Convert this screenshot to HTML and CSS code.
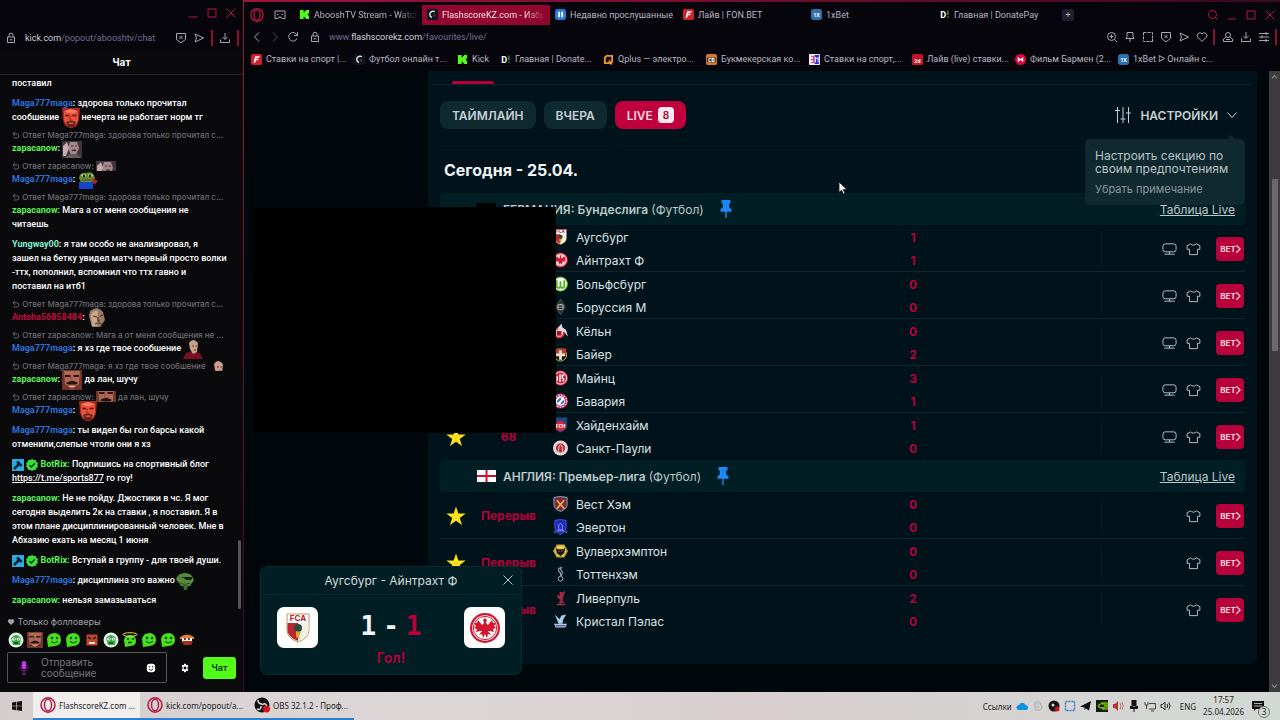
FILE: index.html
```html
<!DOCTYPE html>
<html lang="ru">

<head>
    <meta charset="UTF-8" />
    <meta name="viewport" content="width=device-width, initial-scale=1.0" />
    <title>FlashscoreKZ.com - Избранное</title>
    <link rel="stylesheet" href="styles.css">
</head>

<body>
    <!-- Icons -->
    <svg class="sprite" aria-hidden="true">
        <symbol id="lock" viewBox="0 0 12 12"><path d="M2.500 5h7v5.500h-7zM4 5V3.200a2 2 0 0 1 4 0V5M4.500 7.800h3" /></symbol>
        <symbol id="shield" viewBox="0 0 12 12"><path d="M1.500 1.500h9v6L6 10.800 1.500 7.500zM4.500 4l3 3M7.500 4l-3 3" /></symbol>
        <symbol id="send" viewBox="0 0 12 12"><path d="M2 2l8.500 4L2 10l1.500-4z" /></symbol>
        <symbol id="download" viewBox="0 0 12 12"><path d="M6 1v6M3.500 5L6 7.500 8.500 5M1.500 7.500v3h9v-3" /></symbol>
        <symbol id="min" viewBox="0 0 12 12"><path d="M1.500 10h9" /></symbol>
        <symbol id="max" viewBox="0 0 12 12"><path d="M2 2h8v8H2z" /></symbol>
        <symbol id="close" viewBox="0 0 12 12"><path d="M1.500 1.500l9 9M10.500 1.500l-9 9" /></symbol>
        <symbol id="search" viewBox="0 0 12 12"><circle cx="5.500" cy="5.500" r="4" /><path d="M8.500 8.500l2 2" /></symbol>
        <symbol id="zoom" viewBox="0 0 12 12"><circle cx="5.500" cy="5.500" r="4" /><path d="M8.500 8.500l2.500 2.500M3.500 5.500h4M5.500 3.500v4" /></symbol>
        <symbol id="pinbar" viewBox="0 0 12 12"><path d="M3 1.500h6v4l1 2H2l1-2zM6 7.500V11" /></symbol>
        <symbol id="snap" viewBox="0 0 12 12"><path d="M1.500 1.500h9v6M1.500 1.500v9h6M8 10.500h3M10.500 8v3" stroke-dasharray="3 1" /></symbol>
        <symbol id="heart" viewBox="0 0 12 12"><path d="M6 10.500L1.800 6.300a2.500 2.500 0 0 1 4.200-3.500 2.500 2.500 0 0 1 4.200 3.500z" /></symbol>
        <symbol id="user" viewBox="0 0 12 12"><circle cx="6" cy="4" r="2.500" /><path d="M4 6L1.500 8v2.500h9V8L8 6M4 8.500h4" /></symbol>
        <symbol id="menu" viewBox="0 0 12 12"><path d="M1 2.500h10M1 6h10M1 9.500h10M8 1v3M4 4.500v3M8 8v3" /></symbol>
        <symbol id="back" viewBox="0 0 12 12"><path d="M8 1.500L3.500 6 8 10.500" /></symbol>
        <symbol id="forward" viewBox="0 0 12 12"><path d="M4 1.500L8.500 6 4 10.500" /></symbol>
        <symbol id="reload" viewBox="0 0 12 12"><path d="M10 7.500A4.300 4.300 0 1 1 9.300 3L10.500 4.500M10.500 1v3.500H7" /></symbol>
        <symbol id="vr" viewBox="0 0 14 12"><path d="M2 2h10v7.500H9.200L8 8H6L4.800 9.500H2zM4 5.500h1.500M8.500 5.500H10" /></symbol>
        <symbol id="reply" viewBox="0 0 10 10"><path d="M4 .8L1.200 3.500 4 6.200M1.200 3.500H6a2.600 2.600 0 0 1 0 5.200H2" /></symbol>
        <symbol id="chevron" viewBox="0 0 12 12"><path d="M1.500 3.500L6 8.500l4.500-5" /></symbol>
        <symbol id="sliders" viewBox="0 0 18 18"><path d="M3.500 1v16M1 4.500h5M9 1v16M6.500 13h5M14.500 1v16M12 7h5" /></symbol>
        <symbol id="tv" viewBox="0 0 16 14"><rect x="1" y="1.500" width="14" height="8.500" rx="2.500" /><path d="M2.500 12.500h11M8 10v2.500" /></symbol>
        <symbol id="shirt" viewBox="0 0 16 14"><path d="M5 1.500L1.200 3.500v3.800h2.600V13h8.400V7.300h2.600V3.500L11 1.500c-.8 1.800-5.200 1.800-6 0z" /></symbol>
        <symbol id="star" viewBox="0 0 20 20"><path fill="#ffe01b" stroke="none" d="M10 .5l2.400 7h7.300l-5.900 4.400 2.200 7.200-6-4.400-6 4.400 2.200-7.200L.3 7.500h7.300z" /></symbol>
        <symbol id="pin" viewBox="0 0 12 20"><path fill="#1e86f0" stroke="none" d="M1.500 1h9v3.500H9.200v4l2.300 1.800v2.400H6.700V19H5.300v-6.300H.5v-2.400l2.300-1.800v-4H1.500z" /></symbol>
        <symbol id="opera" viewBox="0 0 16 16"><ellipse cx="8" cy="8" rx="7" ry="7.200" /><ellipse cx="8" cy="8" rx="3.500" ry="5.800" /></symbol>
        <symbol id="arrow" viewBox="0 0 10 14"><path fill="#fff" stroke="#111" stroke-width=".8" d="M1 1v10.500l2.500-2.300L5.300 13l1.700-.8-1.700-3.600H9z" /></symbol>

        <!-- Site icons -->
        <symbol id="fav-kick" viewBox="0 0 12 12"><path fill="#53fc18" d="M1 1h4v2.500h1.300V2.200h1.300V1H11v4H9.700v1H8.500h1.200v1H11v4H7.600V9.800H6.300V8.500H5V11H1z" /></symbol>
        <symbol id="fav-flash" viewBox="0 0 12 12"><rect width="12" height="12" rx="2" fill="#04191f" /><path d="M8.500 3A3.500 3.500 0 0 0 3 6a3.500 3.500 0 0 0 2.500 3.200" fill="none" stroke="#eee" stroke-width="1.500" /><path d="M6 6h3.500L8 9z" fill="#ff0046" opacity=".7" /></symbol>
        <symbol id="fav-pause" viewBox="0 0 12 12"><rect width="12" height="12" rx="3" fill="#2979d9" /><path d="M3.500 3h2v6h-2zM6.800 3h2v6h-2z" fill="#fff" /></symbol>
        <symbol id="fav-fon" viewBox="0 0 12 12"><rect width="12" height="12" rx="2" fill="#d0202e" /><path d="M4.500 2.500h5L9 4H6l-.2 1.200h2.500L7.800 6.800H5.300L4.600 9.500H2.800z" fill="#fff" /></symbol>
        <symbol id="fav-1x" viewBox="0 0 12 12"><rect width="12" height="12" rx="3" fill="#2f70a8" /><text x="6" y="8.500" class="fav-text">1X</text></symbol>
        <symbol id="fav-donate" viewBox="0 0 12 12"><text x="4.500" y="9.500" class="fav-text big">D</text><path d="M9 1.500h1.500v5H9zM9 8h1.500v1.500H9z" fill="#2c9c4a" /></symbol>
        <symbol id="fav-qplus" viewBox="0 0 12 12"><path d="M4 2h6v6.500L8 10H2V4z" fill="none" stroke="#f09a28" stroke-width="2" /><path d="M6.500 7l3 4.500" stroke="#f09a28" stroke-width="2" /></symbol>
        <symbol id="fav-orange" viewBox="0 0 12 12"><rect width="12" height="12" rx="2" fill="#d9772a" /><rect x="1" y="4" width="10" height="5" fill="#333" /><text x="6" y="8.500" class="fav-text">СБ</text></symbol>
        <symbol id="fav-bm" viewBox="0 0 12 12"><rect width="12" height="12" rx="1" fill="#f4f1ff" /><path d="M6 1h5v10H6z" fill="#3529c8" /><path d="M2 2.500h3v7H2M2 6h3" fill="none" stroke="#e02040" /><path d="M7 9V3.500l1.500 2 1.500-2V9" fill="none" stroke="#fff" /></symbol>
        <symbol id="fav-2d" viewBox="0 0 12 12"><rect width="12" height="12" rx="2" fill="#c4142a" /><text x="6" y="9.500" class="fav-text">2d</text></symbol>
        <symbol id="fav-film" viewBox="0 0 12 12"><circle cx="6" cy="6" r="6" fill="#e00840" /><path d="M3 3.500l2 .8v1.200h2V4.300l2-.8v5l-2-.8V6.800H5v.9l-2 .8z" fill="#fff" /></symbol>

        <!-- Chat emotes -->
        <symbol id="em-red" viewBox="0 0 20 20"><path d="M1 0h18l-1 12q-2 8-8 8t-8-8z" fill="#a52a20" /><path d="M3 3q7-4 14 0v9q-2 7-7 7t-7-7z" fill="#e8513c" /><path d="M4 3q6-3 12 0l-3 2H7z" fill="#f47d62" /><path d="M4.500 7.500h4M11.500 7.500h4" stroke="#5b120f" stroke-width="1.400" /><path d="M9.500 8l-.8 4h2.500" stroke="#a72a20" fill="none" /><path d="M5 14q5-3 10 0l-2 5H7z" fill="#6e1f18" /><path d="M7.500 15.200h5" stroke="#e28070" /></symbol>
        <symbol id="em-grey" viewBox="0 0 20 18"><path d="M0 1h20v17H0z" fill="#3f353c" /><path d="M8 2h7l2 6-3 7H9L6 8z" fill="#a58789" /><path d="M1 6l4-4 2 6-3 8H1z" fill="#c8abad" /><path d="M9 6h2.500M13 6h2M10 11q2-2 4 0" stroke="#412b34" stroke-width="1.200" fill="none" /><path d="M3 18l5-4h7l4 4z" fill="#685966" /></symbol>
        <symbol id="em-pepe" viewBox="0 0 20 18"><path d="M1 7Q2 1 8 2q7-3 9 5l-3 5H3z" fill="#5f8a2e" /><path d="M3 4.500h5M10 4.500h5" stroke="#b9c987" stroke-width="2" /><path d="M5 5h2M11 5h2" stroke="#111" stroke-width="2" /><path d="M4 9h10" stroke="#6b5a24" stroke-width="1.500" /><path d="M1 11h14v7H1z" fill="#1545c8" /><path d="M14 7l6 3-4 4z" fill="#b02a20" /></symbol>
        <symbol id="em-head" viewBox="0 0 20 20"><path d="M3 3q7-6 13 1l2 8-5 7H5L2 8z" fill="#9d7a66" /><path d="M4 7q2-5 7-4l-1 15H5z" fill="#c7a98f" /><path d="M6 8l4 1M13 8l3-1M11 9v4h2M8 16q4-2 6 0" stroke="#4b3025" stroke-width="1.200" fill="none" /></symbol>
        <symbol id="em-robe" viewBox="0 0 20 20"><path d="M0 20l3-6 6-2 8 2 3 6z" fill="#7a0f20" /><path d="M6 4q4-6 9 0l-1 9-4 2-3-5z" fill="#caa08b" /><path d="M9 7h2M12.500 7h1.500M11 11h2" stroke="#573127" stroke-width="1.200" /></symbol>
        <symbol id="em-tache" viewBox="0 0 20 20"><path d="M0 0h20v20H0z" fill="#6f352c" /><path d="M2 1h16l-1 13-7 5-7-5z" fill="#b06754" /><path d="M3 6h5.500M11.500 6H17" stroke="#2c1613" stroke-width="2" /><path d="M9 7v4h3" fill="none" stroke="#8a4a3c" /><path d="M4 13q6-4 12 0l-2 1.500H6z" fill="#24120f" /><path d="M7 16.500h6" stroke="#e3b3a3" /></symbol>
        <symbol id="em-frog" viewBox="0 0 20 20"><path d="M1 8Q3 2 10 2t9 7l-4 6H6z" fill="#55893e" /><path d="M5 6h13l-2 3H11L9 7z" fill="#15200f" /><path d="M4 12q6 3 11 0" stroke="#294c20" fill="none" /><path d="M8 14h5l-1 5H9z" fill="#3f6b31" /></symbol>
        <symbol id="em-blob" viewBox="0 0 16 16"><path d="M2 15L1 7q1-6 8-6 6 1 6 7 0 5-6 6z" fill="#46e01c" /><circle cx="6" cy="6" r="1.200" fill="#123a08" /><circle cx="11" cy="6" r="1.200" fill="#123a08" /><path d="M5 9.500q3 3 7 0" stroke="#123a08" fill="none" /></symbol>
        <symbol id="em-white" viewBox="0 0 16 16"><circle cx="8" cy="8" r="7.500" fill="#e4f3e2" /><path d="M3 6q5-6 10 0l-1 7H5z" fill="#35a848" /><ellipse cx="6" cy="7" rx="1.800" ry="1.500" fill="#fff" /><ellipse cx="10.500" cy="7" rx="1.800" ry="1.500" fill="#fff" /><path d="M6 7h1M10 7h1M6 11h4" stroke="#111" /></symbol>
        <symbol id="em-box" viewBox="0 0 16 16"><rect x="2.500" y="2.500" width="11" height="11" fill="#c3452f" /><path d="M4 5l3 2M12 5L9 7" stroke="#111" stroke-width="1.500" /><path d="M5 11h6" stroke="#f1dfca" stroke-width="2" /></symbol>
        <symbol id="em-halo" viewBox="0 0 16 16"><path d="M3 15L2 8q1-5 7-5 5 1 5 6t-6 5z" fill="#46e01c" /><ellipse cx="8" cy="2.500" rx="7" ry="1.800" fill="none" stroke="#e9d34d" /><path d="M5 7h2M10 7h2M6 10.500h4" stroke="#123a08" stroke-width="1.500" /></symbol>
        <symbol id="em-burger" viewBox="0 0 16 16"><path d="M1 5q7-5 14 0v2H1z" fill="#df7f34" /><path d="M3 6h10v4H3z" fill="#fff0dd" /><path d="M2 9h12l-2 4H5z" fill="#a62c1b" /><path d="M5 7h2M9 7h2" stroke="#111" stroke-width="1.500" /></symbol>
        <symbol id="badge-mod" viewBox="0 0 12 12"><rect width="12" height="12" fill="#2ba9e0" /><path d="M2 10l5-5M5 2.500L9.500 7" stroke="#06222f" stroke-width="2.500" /></symbol>
        <symbol id="badge-ok" viewBox="0 0 12 12"><path fill="#3ae03a" d="M6 0l1.700 1.100 2-.1.600 2L12 4.200 11.300 6l.7 1.800-1.700 1.200-.6 2-2-.1L6 12l-1.700-1.100-2 .1-.6-2L0 7.800.7 6 0 4.200 1.700 3l.6-2 2 .1z" /><path d="M3.500 6.200l2 1.800 3.200-3.700" stroke="#04250a" stroke-width="1.400" fill="none" /></symbol>

        <!-- Club crests -->
        <symbol id="fca" viewBox="0 0 24 30"><path d="M1 1h22v16q0 8-11 12Q1 25 1 17z" fill="#fff" stroke="#b99a5a" /><path d="M1.500 10H12v18Q1.500 24 1.500 17z" fill="#bd2532" /><path d="M12 10h10.500v7q0 8-10.500 11z" fill="#f2efe4" /><circle cx="12" cy="15" r="4" fill="#2e4a3c" /><path d="M10 18l5 1-2 4 1 3-4-2z" fill="#cfa92b" /><text x="12" y="8" class="crest-text">FCA</text></symbol>
        <symbol id="sge" viewBox="0 0 30 30"><circle cx="15" cy="15" r="15" fill="#d3152d" /><circle cx="15" cy="15" r="12.800" fill="#fff" /><circle cx="15" cy="15" r="11.600" fill="none" stroke="#d3152d" stroke-width="1" /><path fill="#d3152d" d="M15 5l2 2-1 3 2 2 4-5 1 3 3 0-2 3 2 2-3 1 1 3-4-1-2 0 3 4-3-1-1 4-2-4-2 4-1-4-3 1 3-4-2 0-4 1 1-3-3-1 2-2-2-3 3 0 1-3 4 5 2-2-1-3z" /></symbol>
        <symbol id="wob" viewBox="0 0 16 16"><circle cx="8" cy="8" r="8" fill="#57b52b" /><circle cx="8" cy="8" r="6.800" fill="#fff" /><path d="M4 4v6q0 2 2 2t2-2V5v5q0 2 2 2t2-2V4" fill="none" stroke="#57b52b" stroke-width="2" /></symbol>
        <symbol id="bmg" viewBox="0 0 16 16"><path d="M8 0l5 8-5 8-5-8z" fill="#202629" stroke="#5b6468" /><circle cx="8" cy="8" r="3.500" fill="#a8aeb1" /><path d="M6 7h4M6 9.500h4" stroke="#111" stroke-width="1.200" /></symbol>
        <symbol id="koe" viewBox="0 0 16 16"><circle cx="6.500" cy="10" r="6" fill="#dc2534" /><circle cx="6.500" cy="10" r="4" fill="#f4dadd" /><path d="M4 8h5v5H4z" fill="#a21522" /><path d="M5 5l4-5 1 4 4 3 2 7-4-5-4-1z" fill="#d8dadd" /></symbol>
        <symbol id="b04" viewBox="0 0 16 16"><circle cx="8" cy="9" r="6.500" fill="#161616" stroke="#d4b54a" /><path d="M2 2h5v6H2zM9 2h5v6H9z" fill="#c43a30" /><path d="M8 4v10M3 9h10" stroke="#e8e1ce" stroke-width="3" /></symbol>
        <symbol id="m05" viewBox="0 0 16 16"><circle cx="8" cy="8" r="8" fill="#d6203a" /><circle cx="8" cy="8" r="6.500" fill="none" stroke="#fff" /><path d="M4.500 11V6M7.500 12V4M10 11q3-1 0-3V5h2" fill="none" stroke="#fff" stroke-width="1.600" /></symbol>
        <symbol id="fcb" viewBox="0 0 16 16"><circle cx="8" cy="8" r="8" fill="#d0204f" /><circle cx="8" cy="8" r="6.500" fill="none" stroke="#d5cfe8" stroke-width="1.500" stroke-dasharray="2 1" /><circle cx="8" cy="8" r="5" fill="#fff" /><path d="M4 8l4-4 1 2-4 4zM8 10l4-4v3l-3 3z" fill="#2872c8" /></symbol>
        <symbol id="fch" viewBox="0 0 16 16"><path d="M1 0h14v9q0 4-7 7-7-3-7-7z" fill="#174c83" /><circle cx="8" cy="9" r="5.500" fill="#dc2038" /><text x="8" y="11" class="crest-text tiny">FCH</text></symbol>
        <symbol id="stp" viewBox="0 0 16 16"><circle cx="8" cy="8" r="8" fill="#f3eeee" /><circle cx="8" cy="8" r="5" fill="#bd2637" /><path d="M6 12V7l2-3 2 3v5" fill="none" stroke="#f1d9db" /><circle cx="8" cy="8" r="6.700" fill="none" stroke="#a0525a" stroke-dasharray="1 1" stroke-width=".7" /></symbol>
        <symbol id="whu" viewBox="0 0 16 16"><path d="M1 1q7-2 14 0v8q0 4-7 7-7-3-7-7z" fill="#7d2638" stroke="#7fb0c8" /><path d="M4 4l8 9M12 4l-8 9" stroke="#e0b45a" stroke-width="1.800" /></symbol>
        <symbol id="eve" viewBox="0 0 16 16"><path d="M2 1q6-2 12 0v8q0 4-6 7-6-3-6-7z" fill="#1d2cc0" stroke="#4955da" /><path d="M6 11V6l2-2 2 2v5zM4 12h8" stroke="#8e98f2" fill="none" /><path d="M0 12l4 1-2 2zM16 12l-4 1 2 2z" fill="#4955da" /></symbol>
        <symbol id="wol" viewBox="0 0 16 16"><path d="M4 1h8l4 7-4 7H4L0 8z" fill="#c9a02a" /><path d="M5 2.500h6L14 8l-3 5.500H5L2 8z" fill="#e9cf60" /><path d="M3 5l3 1h4l3-1-1 5-4 3.500L4 10z" fill="#161616" /><path d="M5.500 8h2M8.500 8h2" stroke="#c33" /></symbol>
        <symbol id="tot" viewBox="0 0 16 16"><circle cx="8" cy="13" r="2.500" fill="none" stroke="#aab8cc" /><path d="M8 10V7L6 5V2l3-1-1 2 2 3-1 4" fill="none" stroke="#8c9db8" stroke-width="1.200" /></symbol>
        <symbol id="liv" viewBox="0 0 16 16"><path fill="#a32a3a" d="M7 1l3 1 3-2-1 4-1 3-1 3 2 3H6l2-3-3-2-1-4 3 2z" /><path d="M4 15h9M8 11v3" stroke="#a32a3a" stroke-width="1.500" /></symbol>
        <symbol id="cry" viewBox="0 0 16 16"><path fill="#a9d2e8" d="M2 1l5 5 2-4 5-1-3 5-1 5H6L4 6z" /><path d="M1 11h14l-2 4H3z" fill="#c9cbd8" /><path d="M3 13h10" stroke="#3565b0" stroke-width="1.500" /></symbol>
    </svg>

    <div class="desktop">
        <!-- Chat popout -->
        <aside class="chat-window">
            <div class="window-buttons">
                <button aria-label="Свернуть"><svg class="icon"><use href="#min" /></svg></button>
                <button aria-label="Развернуть"><svg class="icon"><use href="#max" /></svg></button>
                <button aria-label="Закрыть"><svg class="icon"><use href="#close" /></svg></button>
            </div>
            <div class="chat-url">
                <svg class="icon"><use href="#lock" /></svg>
                <span class="url">kick.com<i>/popout/abooshtv/chat</i></span>
                <svg class="icon"><use href="#shield" /></svg>
                <svg class="icon"><use href="#send" /></svg>
                <span class="mark"></span>
                <svg class="icon"><use href="#download" /></svg>
                <span class="mark"></span>
            </div>
            <h2 class="chat-title">Чат</h2>

            <div class="messages">
                <p>поставил</p>
                <p><b class="blue">Maga777maga</b><b>:</b> здорова только прочитал<br>сообшение <svg class="emote"><use href="#em-red" /></svg>нечерта не работает норм тг</p>
                <div class="answer">
                    <p class="reply"><svg><use href="#reply" /></svg> Ответ Maga777maga: здорова только прочитал с...</p>
                    <p><b class="green">zapacanow</b><b>:</b> <svg class="emote"><use href="#em-grey" /></svg></p>
                </div>
                <div class="answer">
                    <p class="reply"><svg><use href="#reply" /></svg> Ответ zapacanow: <svg class="emote cut"><use href="#em-grey" width="20" height="18" /></svg></p>
                    <p><b class="blue">Maga777maga</b><b>:</b> <svg class="emote"><use href="#em-pepe" /></svg></p>
                </div>
                <div class="answer">
                    <p class="reply"><svg><use href="#reply" /></svg> Ответ Maga777maga: здорова только прочитал с...</p>
                    <p><b class="green">zapacanow:</b> Мага а от меня сообщения не<br>читаешь</p>
                </div>
                <p><b class="mint">Yungway00</b><b>:</b> я там особо не анализировал, я<br>зашел на бетку увидел матч первый просто волки<br>-ттх, пополнил, вспомнил что ттх гавно и<br>поставил на итб1</p>
                <div class="answer">
                    <p class="reply"><svg><use href="#reply" /></svg> Ответ Maga777maga: здорова только прочитал с...</p>
                    <p><b class="red">Antoha56858484</b><b>:</b> <svg class="emote"><use href="#em-head" /></svg></p>
                </div>
                <div class="answer">
                    <p class="reply"><svg><use href="#reply" /></svg> Ответ zapacanow: Мага а от меня сообщения не ...</p>
                    <p><b class="blue">Maga777maga</b><b>:</b> я хз где твое сообшение <svg class="emote"><use href="#em-robe" /></svg></p>
                </div>
                <div class="answer">
                    <p class="reply"><svg><use href="#reply" /></svg> Ответ Maga777maga: я хз где твое сообшение <svg class="emote cut"><use href="#em-robe" width="20" height="20" /></svg></p>
                    <p><b class="green">zapacanow</b><b>:</b> <svg class="emote"><use href="#em-tache" /></svg> да лан, шучу</p>
                </div>
                <div class="answer">
                    <p class="reply"><svg><use href="#reply" /></svg> Ответ zapacanow: <svg class="emote cut"><use href="#em-tache" y="-4" width="20" height="20" /></svg> да лан, шучу</p>
                    <p><b class="blue">Maga777maga</b><b>:</b> <svg class="emote"><use href="#em-red" /></svg></p>
                </div>
                <p><b class="blue">Maga777maga</b><b>:</b> ты видел бы гол барсы какой<br>отменили,слепые чтоли они я хз</p>
                <p><svg class="badge"><use href="#badge-mod" /></svg> <svg class="badge"><use href="#badge-ok" /></svg> <b class="green">BotRix:</b> Подпишись на спортивный блог<br><a href="https://t.me/sports877">https://t.me/sports877</a> го гоу!</p>
                <p><b class="green">zapacanow:</b> Не не пойду. Джостики в чс. Я мог<br>сегодня выделить 2к на ставки , я поставил. Я в<br>этом плане дисциплинированный человек. Мне в<br>Абхазию ехать на месяц 1 июня</p>
                <p><svg class="badge"><use href="#badge-mod" /></svg> <svg class="badge"><use href="#badge-ok" /></svg> <b class="green">BotRix:</b> Вступай в группу - для твоей души.</p>
                <p><b class="blue">Maga777maga</b><b>:</b> дисциплина это важно<svg class="emote"><use href="#em-frog" /></svg></p>
                <p><b class="green">zapacanow:</b> нельзя замазываться</p>
                <span class="chat-thumb"></span>
            </div>

            <div class="chat-footer">
                <p class="followers"><svg><use href="#heart" /></svg> Только фолловеры</p>
                <div class="quick-emotes">
                    <svg><use href="#em-white" /></svg>
                    <svg><use href="#em-tache" /></svg>
                    <svg><use href="#em-blob" /></svg>
                    <svg><use href="#em-blob" /></svg>
                    <svg><use href="#em-box" /></svg>
                    <svg><use href="#em-white" /></svg>
                    <svg><use href="#em-halo" /></svg>
                    <svg><use href="#em-blob" /></svg>
                    <svg><use href="#em-blob" /></svg>
                    <svg><use href="#em-burger" /></svg>
                </div>
                <form class="chat-form">
                    <div class="field">
                        <svg viewBox="0 0 12 16"><rect x="3.500" y="1" width="5" height="9" rx="2.500" fill="#b93be0" /><path d="M1.500 7a4.500 4.500 0 0 0 9 0M6 11.500V15M3.500 15h5" fill="none" stroke="#8a22b5" /></svg>
                        <textarea rows="2" aria-label="Сообщение" placeholder="Отправить сообщение"></textarea>
                        <svg viewBox="0 0 12 12" class="smile"><rect x="1" y="1" width="10" height="10" rx="3.500" fill="#fff" /><path d="M4 3.500v2M8 3.500v2M3.500 7.500q2.500 2.500 5 0" fill="none" stroke="#111" /></svg>
                    </div>
                    <button type="button" class="gear" aria-label="Настройки чата"><svg viewBox="0 0 12 12"><path fill="#fff" d="M5 1h2l.4 1.600 1.600-.5 1 1.700L9 5v2l1 1.200-1 1.700-1.600-.5L7 11H5l-.4-1.600-1.600.5-1-1.700L3 7V5L2 3.800l1-1.700 1.600.5z" /><circle cx="6" cy="6" r="1.700" fill="#0b0b0e" /></svg></button>
                    <button type="button" class="chat-send">Чат</button>
                </form>
            </div>
        </aside>

        <!-- Main browser -->
        <main class="browser">
            <div class="tabs">
                <svg class="opera"><use href="#opera" /></svg>
                <svg class="vr"><use href="#vr" /></svg>
                <a href="#" class="tab fade"><svg><use href="#fav-kick" /></svg><span>AbooshTV Stream - Watch</span></a>
                <a href="#" class="tab active fade"><svg><use href="#fav-flash" /></svg><span>FlashscoreKZ.com - Избр</span></a>
                <a href="#" class="tab"><svg><use href="#fav-pause" /></svg><span>Недавно прослушанные</span></a>
                <a href="#" class="tab"><svg><use href="#fav-fon" /></svg><span>Лайв | FON.BET</span></a>
                <a href="#" class="tab"><svg><use href="#fav-1x" /></svg><span>1xBet</span></a>
                <a href="#" class="tab"><svg><use href="#fav-donate" /></svg><span>Главная | DonatePay</span></a>
                <button class="new-tab" aria-label="Новая вкладка">+</button>
                <div class="window-buttons">
                    <button aria-label="Поиск"><svg class="icon"><use href="#search" /></svg></button>
                    <button aria-label="Свернуть"><svg class="icon"><use href="#min" /></svg></button>
                    <button aria-label="Развернуть"><svg class="icon"><use href="#max" /></svg></button>
                    <button aria-label="Закрыть"><svg class="icon"><use href="#close" /></svg></button>
                </div>
            </div>

            <div class="address">
                <svg class="icon"><use href="#back" /></svg>
                <svg class="icon dim"><use href="#forward" /></svg>
                <svg class="icon"><use href="#reload" /></svg>
                <svg class="icon lock"><use href="#lock" /></svg>
                <span class="url"><i>www.</i>flashscorekz.com<i>/favourites/live/</i></span>
                <div class="tools">
                    <svg class="icon"><use href="#zoom" /></svg>
                    <svg class="icon"><use href="#pinbar" /></svg>
                    <svg class="icon"><use href="#snap" /></svg>
                    <svg class="icon"><use href="#shield" /></svg>
                    <svg class="icon"><use href="#send" /></svg>
                    <svg class="icon"><use href="#heart" /></svg>
                    <span class="mark"></span>
                    <svg class="icon"><use href="#user" /></svg>
                    <svg class="icon"><use href="#download" /></svg>
                    <svg class="icon"><use href="#menu" /></svg>
                    <span class="mark"></span>
                </div>
            </div>

            <nav class="bookmarks">
                <a href="#"><svg><use href="#fav-fon" /></svg>Ставки на спорт |...</a>
                <a href="#"><svg><use href="#fav-flash" /></svg>Футбол онлайн т...</a>
                <a href="#" class="short"><svg><use href="#fav-kick" /></svg>Kick</a>
                <a href="#"><svg><use href="#fav-donate" /></svg>Главная | Donate...</a>
                <a href="#"><svg><use href="#fav-qplus" /></svg>Qplus — электро...</a>
                <a href="#"><svg><use href="#fav-orange" /></svg>Букмекерская ко...</a>
                <a href="#"><svg><use href="#fav-bm" /></svg>Ставки на спорт,...</a>
                <a href="#"><svg><use href="#fav-2d" /></svg>Лайв (live) ставки...</a>
                <a href="#"><svg><use href="#fav-film" /></svg>Фильм Бармен (2...</a>
                <a href="#"><svg><use href="#fav-1x" /></svg>1xBet ᐅ Онлайн с...</a>
            </nav>

            <div class="viewport">
                <div class="panel">
                    <div class="panel-top"><span></span></div>
                    <div class="filters">
                        <button class="filter">ТАЙМЛАЙН</button>
                        <button class="filter">ВЧЕРА</button>
                        <button class="filter live">LIVE <span>8</span></button>
                        <div class="settings">
                            <button class="settings-btn"><svg class="sliders"><use href="#sliders" /></svg>НАСТРОЙКИ<svg class="chev"><use href="#chevron" /></svg></button>
                            <div class="hint">
                                <p>Настроить секцию по<br>своим предпочтениям</p>
                                <button>Убрать примечание</button>
                            </div>
                        </div>
                    </div>
                    <h1>Сегодня - 25.04.</h1>

                    <section class="league">
                        <header>
                            <svg class="flag" viewBox="0 0 19 12"><path d="M0 0h19v4H0z" fill="#000" /><path d="M0 4h19v4H0z" fill="#d00" /><path d="M0 8h19v4H0z" fill="#fc0" /></svg>
                            <h2>ГЕРМАНИЯ: Бундеслига <small>(Футбол)</small></h2>
                            <svg class="pin"><use href="#pin" /></svg>
                            <a href="#">Таблица Live</a>
                        </header>
                        <div class="match">
                            <button class="fav" aria-label="Избранное"><svg><use href="#star" /></svg></button>
                            <span class="time"></span>
                            <div class="teams"><span><svg><use href="#fca" /></svg>Аугсбург</span><span><svg><use href="#sge" /></svg>Айнтрахт Ф</span></div>
                            <div class="score"><b>1</b><b>1</b></div>
                            <div class="extra"><svg><use href="#tv" /></svg><svg><use href="#shirt" /></svg><button class="bet">BET<svg><use href="#forward" /></svg></button></div>
                        </div>
                        <div class="match">
                            <button class="fav" aria-label="Избранное"><svg><use href="#star" /></svg></button>
                            <span class="time"></span>
                            <div class="teams"><span><svg><use href="#wob" /></svg>Вольфсбург</span><span><svg><use href="#bmg" /></svg>Боруссия М</span></div>
                            <div class="score"><b>0</b><b>0</b></div>
                            <div class="extra"><svg><use href="#tv" /></svg><svg><use href="#shirt" /></svg><button class="bet">BET<svg><use href="#forward" /></svg></button></div>
                        </div>
                        <div class="match">
                            <button class="fav" aria-label="Избранное"><svg><use href="#star" /></svg></button>
                            <span class="time"></span>
                            <div class="teams"><span><svg><use href="#koe" /></svg>Кёльн</span><span><svg><use href="#b04" /></svg>Байер</span></div>
                            <div class="score"><b>0</b><b>2</b></div>
                            <div class="extra"><svg><use href="#tv" /></svg><svg><use href="#shirt" /></svg><button class="bet">BET<svg><use href="#forward" /></svg></button></div>
                        </div>
                        <div class="match">
                            <button class="fav" aria-label="Избранное"><svg><use href="#star" /></svg></button>
                            <span class="time"></span>
                            <div class="teams"><span><svg><use href="#m05" /></svg>Майнц</span><span><svg><use href="#fcb" /></svg>Бавария</span></div>
                            <div class="score"><b>3</b><b>1</b></div>
                            <div class="extra"><svg><use href="#tv" /></svg><svg><use href="#shirt" /></svg><button class="bet">BET<svg><use href="#forward" /></svg></button></div>
                        </div>
                        <div class="match">
                            <button class="fav" aria-label="Избранное"><svg><use href="#star" /></svg></button>
                            <span class="time">68</span>
                            <div class="teams"><span><svg><use href="#fch" /></svg>Хайденхайм</span><span><svg><use href="#stp" /></svg>Санкт-Паули</span></div>
                            <div class="score"><b>1</b><b>0</b></div>
                            <div class="extra"><svg><use href="#tv" /></svg><svg><use href="#shirt" /></svg><button class="bet">BET<svg><use href="#forward" /></svg></button></div>
                        </div>
                    </section>

                    <section class="league">
                        <header>
                            <svg class="flag" viewBox="0 0 19 12"><path d="M0 0h19v12H0z" fill="#fff" /><path d="M0 6h19M9.500 0v12" stroke="#d0102c" stroke-width="2" /></svg>
                            <h2>АНГЛИЯ: Премьер-лига <small>(Футбол)</small></h2>
                            <svg class="pin"><use href="#pin" /></svg>
                            <a href="#">Таблица Live</a>
                        </header>
                        <div class="match">
                            <button class="fav" aria-label="Избранное"><svg><use href="#star" /></svg></button>
                            <span class="time">Перерыв</span>
                            <div class="teams"><span><svg><use href="#whu" /></svg>Вест Хэм</span><span><svg><use href="#eve" /></svg>Эвертон</span></div>
                            <div class="score"><b>0</b><b>0</b></div>
                            <div class="extra"><svg><use href="#shirt" /></svg><button class="bet">BET<svg><use href="#forward" /></svg></button></div>
                        </div>
                        <div class="match">
                            <button class="fav" aria-label="Избранное"><svg><use href="#star" /></svg></button>
                            <span class="time">Перерыв</span>
                            <div class="teams"><span><svg><use href="#wol" /></svg>Вулверхэмптон</span><span><svg><use href="#tot" /></svg>Тоттенхэм</span></div>
                            <div class="score"><b>0</b><b>0</b></div>
                            <div class="extra"><svg><use href="#shirt" /></svg><button class="bet">BET<svg><use href="#forward" /></svg></button></div>
                        </div>
                        <div class="match">
                            <button class="fav" aria-label="Избранное"><svg><use href="#star" /></svg></button>
                            <span class="time">Перерыв</span>
                            <div class="teams"><span><svg><use href="#liv" /></svg>Ливерпуль</span><span><svg><use href="#cry" /></svg>Кристал Пэлас</span></div>
                            <div class="score"><b>2</b><b>0</b></div>
                            <div class="extra"><svg><use href="#shirt" /></svg><button class="bet">BET<svg><use href="#forward" /></svg></button></div>
                        </div>
                    </section>
                </div>
                <div class="scrollbar"><svg class="up"><use href="#chevron" /></svg><span></span><svg><use href="#chevron" /></svg></div>

                <div class="player"></div>

                <!-- Goal notification -->
                <div class="goal">
                    <header>Аугсбург - Айнтрахт Ф <button aria-label="Закрыть"><svg><use href="#close" /></svg></button></header>
                    <div class="goal-body">
                        <span class="crest"><svg><use href="#fca" /></svg></span>
                        <div class="result"><strong><b>1</b><b>-</b><em>1</em></strong><span>Гол!</span></div>
                        <span class="crest"><svg><use href="#sge" /></svg></span>
                    </div>
                </div>
                <svg class="cursor"><use href="#arrow" /></svg>
            </div>
        </main>
    </div>

    <!-- Taskbar -->
    <footer class="taskbar">
        <button class="start" aria-label="Пуск"><svg viewBox="0 0 12 12"><path d="M0 1.700L5 1v4.600H0zM5.800.9L12 0v5.600H5.800zM0 6.400h5V11l-5-.7zM5.800 6.400H12V12l-6.200-.9z" /></svg></button>
        <button class="task current"><svg class="opera"><use href="#opera" /></svg>FlashscoreKZ.com ...</button>
        <button class="task"><svg class="opera"><use href="#opera" /></svg>kick.com/popout/a...</button>
        <button class="task"><svg viewBox="0 0 16 16"><circle cx="8" cy="8" r="7.500" fill="#111" /><path d="M8 7Q4 7 4 3M8 8q4-3 5 2M7 9q0 5-4 3" fill="none" stroke="#ddd" stroke-width="1.500" /><circle cx="12.500" cy="12" r="3.500" fill="#e01020" /></svg>OBS 32.1.2 - Проф...</button>
        <div class="tray">
            <span class="links">Ссылки</span>
            <svg viewBox="0 0 12 12"><path d="M3 10a2.500 2.500 0 0 1 0-5 3.500 3.500 0 0 1 6.500 0A2.500 2.500 0 0 1 9.500 10z" fill="#1090e0" /></svg>
            <svg viewBox="0 0 12 12"><path d="M3 2h4l2 2v2l1 2-2 2H3zM4.500 4h2M4.500 7h3" fill="none" stroke="#aaa" /></svg>
            <svg viewBox="0 0 12 12"><circle cx="6" cy="6" r="5.500" fill="#111" /><circle cx="5" cy="5" r="1.500" fill="#ddd" /><circle cx="9" cy="9" r="2.500" fill="#d01020" /></svg>
            <svg viewBox="0 0 12 12"><path d="M1.500 1.500h9v9h-9z" fill="none" stroke="#2f7fc8" stroke-width="1.500" stroke-dasharray="2 1" /></svg>
            <svg viewBox="0 0 12 12"><path d="M0 6.500L11 1 9 10.500 6 8.500 4.500 10V7.500z" fill="#111" /></svg>
            <svg viewBox="0 0 12 12"><path d="M0 0h12v12H0z" fill="#151a12" /><path d="M2 6q4-5 8 0-4 4-8 0M5 3h6v6H6" fill="none" stroke="#76b900" stroke-width="1.500" /></svg>
            <svg viewBox="0 0 12 12"><path d="M1 4h2l3-3v10L3 8H1z" fill="#b33428" /><path d="M8 3q2 3 0 6M10 2q2.500 4 0 8" fill="none" stroke="#b37068" /></svg>
            <svg viewBox="0 0 12 12"><path d="M4 0h4v7H4zM2.500 6v2.500h7V6M6 8.500V12" fill="#111" stroke="#111" /></svg>
            <svg viewBox="0 0 12 12"><path d="M5 3.500h6.500V9H5M1 2v3h3V2M2.500 5v4M7 11h3" fill="none" stroke="#444" /></svg>
            <svg viewBox="0 0 12 12"><path d="M1 4.500h1.500L5 2v8L2.500 7.500H1zM7 4q1.500 2 0 4M8.800 2.500q2.500 3.500 0 7" fill="none" stroke="#222" /></svg>
            <span class="lang">ENG</span>
            <time>17:57<br>25.04.2026</time>
            <div class="notice"><svg viewBox="0 0 12 12"><path d="M0 1h12v8H4l-2 2V9H0z" fill="#111" /><path d="M2 3.500h8M2 6h8" stroke="#ddd" stroke-width=".8" /></svg><span>3</span></div>
        </div>
    </footer>
</body>

</html>
```
FILE: styles.css
```css
/* Reset CSS */
* {
    margin: 0;
    padding: 0;
    box-sizing: border-box;
}

body {
    height: 100vh;
    display: flex;
    flex-direction: column;
    overflow: hidden;
    background-color: #000;
    color: #fff;
    font-family: Inter, "Noto Sans", sans-serif;
    font-size: 10px;
    white-space: nowrap;
}

button,
textarea {
    background: none;
    border: none;
    color: inherit;
    font: inherit;
}

button {
    cursor: pointer;
}

a {
    color: inherit;
    text-decoration: none;
}

.sprite {
    display: none;
}

.icon {
    width: 12px;
    height: 12px;
    flex: none;
    fill: none;
    stroke: #a9a5b5;
    stroke-width: 1;
}

.icon.dim {
    stroke: #4b4754;
}

.desktop {
    flex: 1;
    min-height: 0;
    display: flex;
}

.window-buttons {
    display: flex;
    gap: 7px;
}

.window-buttons button {
    height: 12px;
    line-height: 0;
}

.window-buttons .icon {
    stroke: #b5193f;
}

.mark {
    width: 2px;
    height: 16px;
    flex: none;
    background-color: #8e1034;
}

.url {
    color: #d5d2dd;
    font-family: Roboto, sans-serif;
    font-size: 9px;
}

.url i {
    color: #756d95;
    font-style: normal;
}

/* Chat window */
.chat-window {
    flex: 0 0 243px;
    min-width: 0;
    display: flex;
    flex-direction: column;
    overflow: hidden;
    background-color: #0a0a0d;
}

.chat-window > .window-buttons {
    height: 25px;
    align-items: center;
    justify-content: flex-end;
    padding-right: 6px;
    background-color: #06050b;
}

.chat-url {
    height: 25px;
    display: flex;
    align-items: center;
    gap: 6px;
    padding: 0 4px 0 5px;
    background-color: #06050b;
}

.chat-url .url {
    flex: 1;
    padding-left: 2px;
}

.chat-title {
    height: 25px;
    border-bottom: 1px solid #25262a;
    font-size: 10px;
    line-height: 24px;
    text-align: center;
}

.messages {
    flex: 1;
    min-height: 0;
    position: relative;
    display: flex;
    flex-direction: column;
    justify-content: flex-end;
    gap: 6px;
    overflow: hidden;
    padding: 0 12px 4px;
    font-family: Roboto, sans-serif;
    font-size: 9px;
    font-weight: 500;
    line-height: 14px;
}

.messages .reply {
    font-family: Inter, sans-serif;
    font-size: 8px;
    line-height: 11px;
    color: #6c6c71;
}

.reply svg {
    width: 8px;
    height: 8px;
    vertical-align: -1px;
    fill: none;
    stroke: #77777c;
}

.messages .emote {
    width: 20px;
    height: 20px;
    margin: -6px 0;
    vertical-align: middle;
}

.messages .emote.cut {
    height: 11px;
    margin: -2px 0 0;
    stroke: none;
}

.badge {
    width: 12px;
    height: 12px;
    margin: -2px 0;
    vertical-align: middle;
}

.messages a {
    text-decoration: underline;
}

.blue {
    color: #2f6fd8;
}

.green {
    color: #5df35a;
}

.mint {
    color: #7ff3d2;
}

.red {
    color: #c40a3c;
}

.chat-thumb {
    position: absolute;
    right: 2px;
    bottom: 2px;
    width: 3px;
    height: 69px;
    border-radius: 2px;
    background-color: #55565a;
}

.chat-footer {
    padding: 4px 7px 9px 7px;
}

.followers {
    font-size: 9px;
    line-height: 14px;
    color: #a0a1a6;
}

.followers svg {
    width: 8px;
    height: 8px;
    vertical-align: -1px;
    fill: #a0a1a6;
}

.quick-emotes {
    display: flex;
    gap: 3px;
    padding: 3px 0 4px 1px;
}

.quick-emotes svg {
    width: 16px;
    height: 16px;
}

.chat-form {
    display: flex;
    align-items: center;
}

.field {
    flex: 1;
    min-width: 0;
    height: 31px;
    display: flex;
    align-items: center;
    padding: 0 10px;
    border: 1px solid #55565a;
    border-radius: 2px;
}

.field svg {
    width: 12px;
    height: 15px;
    flex: none;
}

.field .smile {
    height: 12px;
    width: 10px;
}

.field textarea {
    flex: 1;
    min-width: 0;
    height: 22px;
    padding-left: 11px;
    resize: none;
    overflow: hidden;
    line-height: 11px;
    white-space: pre-wrap;
}

.field textarea::placeholder {
    color: #76777c;
}

.gear {
    flex: none;
    width: 36px;
    line-height: 0;
}

.gear svg {
    width: 10px;
    height: 10px;
}

.chat-send {
    flex: none;
    width: 33px;
    height: 22px;
    border-radius: 3px;
    background-color: #53fc18;
    color: #0d3304;
    font-size: 9px;
    font-weight: 600;
}

/* Browser */
.browser {
    flex: 1;
    min-width: 0;
    display: flex;
    flex-direction: column;
    background-color: #06050b;
    border: solid #7d1134;
    border-width: 2px 0 0 1px;
    border-image: linear-gradient(to bottom right, #a0143e, #3a0a1c 50%, #1a0510) 1;
}

.tabs,
.address,
.bookmarks {
    display: flex;
    align-items: center;
    color: #b9b5c6;
    font-family: Roboto, sans-serif;
    font-size: 9px;
}

.tabs {
    height: 25px;
    padding: 0 4px 0 6px;
}

.opera {
    width: 14px;
    height: 14px;
    flex: none;
    fill: none;
    stroke: #b5193f;
    stroke-width: 1.5;
}

.vr {
    width: 14px;
    height: 12px;
    margin: 0 7px 0 9px;
    flex: none;
    fill: none;
    stroke: #a9a5b5;
}

.tab {
    flex: 0 1 128px;
    min-width: 0;
    display: flex;
    align-items: center;
    gap: 4px;
    height: 20px;
    padding-left: 5px;
    overflow: hidden;
}

.tab svg,
.bookmarks svg {
    width: 11px;
    height: 11px;
    flex: none;
}

.tab.active {
    background-color: #92052f;
    color: #f3e6ec;
}

.tab.fade span {
    mask-image: linear-gradient(to right, #000 80%, transparent);
}

.new-tab {
    width: 12px;
    height: 12px;
    border-radius: 2px;
    background-color: #221f2c;
    line-height: 12px;
}

.tabs .window-buttons {
    margin-left: auto;
}

.fav-text {
    fill: #fff;
    font-size: 6px;
    font-weight: 700;
    text-anchor: middle;
}

.fav-text.big {
    font-size: 10px;
}

.address {
    height: 20px;
    gap: 6px;
    padding: 0 2px 0 7px;
}

.address .lock {
    margin-left: 4px;
}

.address .url {
    padding-left: 2px;
}

.tools {
    margin-left: auto;
    display: flex;
    align-items: center;
    gap: 6px;
}

.tools .mark {
    margin: 0 1px 0 -1px;
}

.bookmarks {
    height: 24px;
    padding-left: 7px;
}

.bookmarks a {
    flex: 0 1 103px;
    min-width: 0;
    display: flex;
    align-items: center;
    gap: 4px;
}

.bookmarks .short {
    flex-basis: 43px;
}

.viewport {
    flex: 1;
    min-height: 0;
    position: relative;
    display: flex;
    align-items: flex-start;
    overflow: hidden;
    background-color: #00070a;
    font-size: 12px;
}

.panel {
    flex: 1;
    margin: 0 12px 0 184px;
    padding: 0 12px 31px;
    border-radius: 0 0 8px 8px;
    background-color: #00131b;
    color: #dce2e4;
}

.panel-top {
    height: 14px;
    margin: 0 -8px;
    padding: 10px 20px 0;
    border-bottom: 1px solid #0a242c;
}

.panel-top span {
    display: block;
    width: 42px;
    height: 3px;
    border-radius: 2px 2px 0 0;
    background-color: #b8003a;
}

.filters {
    display: flex;
    gap: 8px;
    height: 62px;
    padding-top: 16px;
    border-bottom: 1px solid #04181f;
}

.filter {
    height: 28px;
    padding: 0 12px;
    border-radius: 8px;
    background-color: #0e2930;
    color: #c8d0d3;
    font-weight: 600;
}

.filter.live {
    display: flex;
    align-items: center;
    gap: 5px;
    background-color: #c0003c;
    color: #f7dce5;
}

.live span {
    width: 16px;
    height: 16px;
    border-radius: 4px;
    background-color: #fbe9ef;
    color: #a0002f;
    font-size: 10px;
    line-height: 16px;
}

.settings {
    position: relative;
    margin-left: auto;
}

.settings-btn {
    display: flex;
    align-items: center;
    gap: 8px;
    height: 28px;
    padding-right: 7px;
    color: #c8d0d3;
    font-weight: 600;
}

.settings-btn svg {
    width: 18px;
    height: 18px;
    fill: none;
    stroke: #c8d0d3;
}

.settings-btn .chev {
    width: 12px;
    height: 12px;
}

.hint {
    position: absolute;
    top: 38px;
    right: 0;
    z-index: 1;
    width: 160px;
    padding: 10px;
    border-radius: 5px;
    background-color: #10292f;
    color: #b9c3c6;
    line-height: 13px;
}

.hint::before {
    content: "";
    position: absolute;
    top: -4px;
    right: 8px;
    border: 6px solid transparent;
    border-top: none;
    border-bottom-color: #10292f;
}

.hint button {
    margin-top: 8px;
    color: #8b979b;
    font-size: 11px;
    line-height: 12px;
}

h1 {
    padding: 12px 4px 12px;
    font-size: 16px;
    font-weight: 700;
    line-height: 22px;
    color: #f2f5f6;
}

.league header {
    height: 32px;
    display: flex;
    align-items: center;
    padding: 0 10px 0 37px;
    border-radius: 3px;
    background-color: #011e24;
    color: #bcc8ca;
}

.flag {
    width: 19px;
    height: 12px;
}

.league h2 {
    margin: 0 16px 0 7px;
    font-size: 12px;
    font-weight: 600;
}

.league small {
    font-size: 12px;
    font-weight: 400;
}

.pin {
    width: 12px;
    height: 20px;
}

.league header a {
    margin-left: auto;
    text-decoration: underline;
}

.match {
    height: 47px;
    display: flex;
    align-items: center;
    padding-top: 1px;
    border-bottom: 1px solid #0c272f;
}

.match:last-child {
    border-bottom-color: transparent;
}

.fav {
    width: 32px;
    line-height: 0;
}

.fav svg {
    width: 20px;
    height: 20px;
}

.time {
    width: 73px;
    text-align: center;
    font-weight: 700;
    color: #b8003a;
}

.teams {
    flex: 1;
    padding-left: 8px;
}

.teams span {
    display: flex;
    align-items: center;
    gap: 8px;
    line-height: 23px;
}

.teams svg {
    width: 15px;
    height: 16px;
}

.score {
    width: 22px;
    margin-right: 177px;
    text-align: center;
    color: #b8003a;
}

.score b {
    display: block;
    line-height: 23px;
}

.extra {
    width: 144px;
    height: 36px;
    display: flex;
    align-items: center;
    justify-content: flex-end;
    gap: 9px;
    padding-right: 1px;
    border-left: 1px solid #05191f;
}

.extra > svg {
    width: 15px;
    height: 14px;
    fill: none;
    stroke: #bcc8ca;
}

.bet {
    width: 28px;
    height: 24px;
    display: flex;
    align-items: center;
    justify-content: center;
    margin-left: 6px;
    border-radius: 4px;
    background-color: #b8003a;
    color: #f4d3de;
    font-size: 8px;
    font-weight: 700;
}

.bet svg {
    width: 10px;
    height: 10px;
    margin: 0 -3px;
    flex: none;
    fill: none;
    stroke: #f4d3de;
    stroke-width: 1.5;
}

.crest-text {
    fill: #c02030;
    font-size: 8px;
    font-weight: 700;
    text-anchor: middle;
}

.crest-text.tiny {
    fill: #fff;
    font-size: 5px;
}

.scrollbar {
    align-self: stretch;
    width: 11px;
    display: flex;
    flex-direction: column;
    align-items: center;
    padding: 2px 0;
    background-color: #3c3c3c;
}

.scrollbar svg {
    width: 7px;
    height: 8px;
    fill: none;
    stroke: #8a8a8a;
    stroke-width: 2;
}

.scrollbar .up {
    transform: rotate(180deg);
}

.scrollbar span {
    width: 6px;
    height: 172px;
    margin: 98px 0 auto;
    background-color: #6a6a6a;
}

/* Stream player over the page */
.player {
    position: absolute;
    top: 136px;
    left: 9px;
    width: 303px;
    height: 226px;
    background-color: #000;
}

.goal {
    position: absolute;
    left: 16px;
    bottom: 17px;
    width: 262px;
    height: 109px;
    border: 1px solid #0a2a30;
    border-radius: 7px;
    background-color: #011e24;
    color: #d5dcde;
}

.goal header {
    position: relative;
    height: 28px;
    border-bottom: 1px solid #08282f;
    line-height: 27px;
    text-align: center;
}

.goal header button {
    position: absolute;
    top: 7px;
    right: 7px;
    line-height: 0;
}

.goal header svg {
    width: 12px;
    height: 12px;
    stroke: #bcc8ca;
}

.goal-body {
    display: flex;
    justify-content: space-between;
    padding: 12px 16px;
}

.crest {
    width: 41px;
    height: 41px;
    display: flex;
    align-items: center;
    justify-content: center;
    border-radius: 7px;
    background-color: #fff;
}

.crest svg {
    width: 30px;
    height: 30px;
}

.result {
    text-align: center;
}

.result strong {
    display: flex;
    gap: 7px;
    color: #f2f5f6;
    font-family: "DejaVu Sans Mono", monospace;
    font-size: 26px;
    line-height: 38px;
}

.result em,
.result span {
    color: #b8003a;
    font-style: normal;
}

.result span {
    font-size: 14px;
    font-weight: 600;
    line-height: 26px;
}

.cursor {
    position: absolute;
    top: 110px;
    left: 594px;
    width: 10px;
    height: 14px;
}

/* Taskbar */
.taskbar {
    height: 28px;
    display: flex;
    background: linear-gradient(to right, #d3cdce, #dcd6d6 30%, #d9cfd1 60%, #d2d8d3);
    color: #222;
    font-family: "Noto Sans", sans-serif;
    font-size: 8px;
}

.start {
    width: 33px;
    line-height: 0;
}

.start svg {
    width: 10px;
    height: 10px;
    fill: #111;
}

.task {
    width: 107px;
    display: flex;
    align-items: center;
    gap: 3px;
    padding-left: 7px;
    border-bottom: 2px solid #2f7fd0;
}

.task.current {
    background-color: #f1eeee;
}

.task svg {
    width: 16px;
    height: 16px;
    flex: none;
}

.tray {
    margin-left: auto;
    display: flex;
    align-items: center;
    gap: 4px;
    padding-right: 16px;
}

.tray svg {
    width: 12px;
    height: 12px;
}

.lang {
    margin: 0 3px 0 4px;
}

.tray time {
    line-height: 12px;
    text-align: center;
}

.notice {
    position: relative;
    margin-left: 4px;
    line-height: 0;
}

.notice span {
    position: absolute;
    right: -6px;
    bottom: -6px;
    width: 12px;
    height: 12px;
    border: 1px solid #777;
    border-radius: 50%;
    background-color: #d6d6d4;
    font-size: 8px;
    line-height: 10px;
    text-align: center;
}
```
